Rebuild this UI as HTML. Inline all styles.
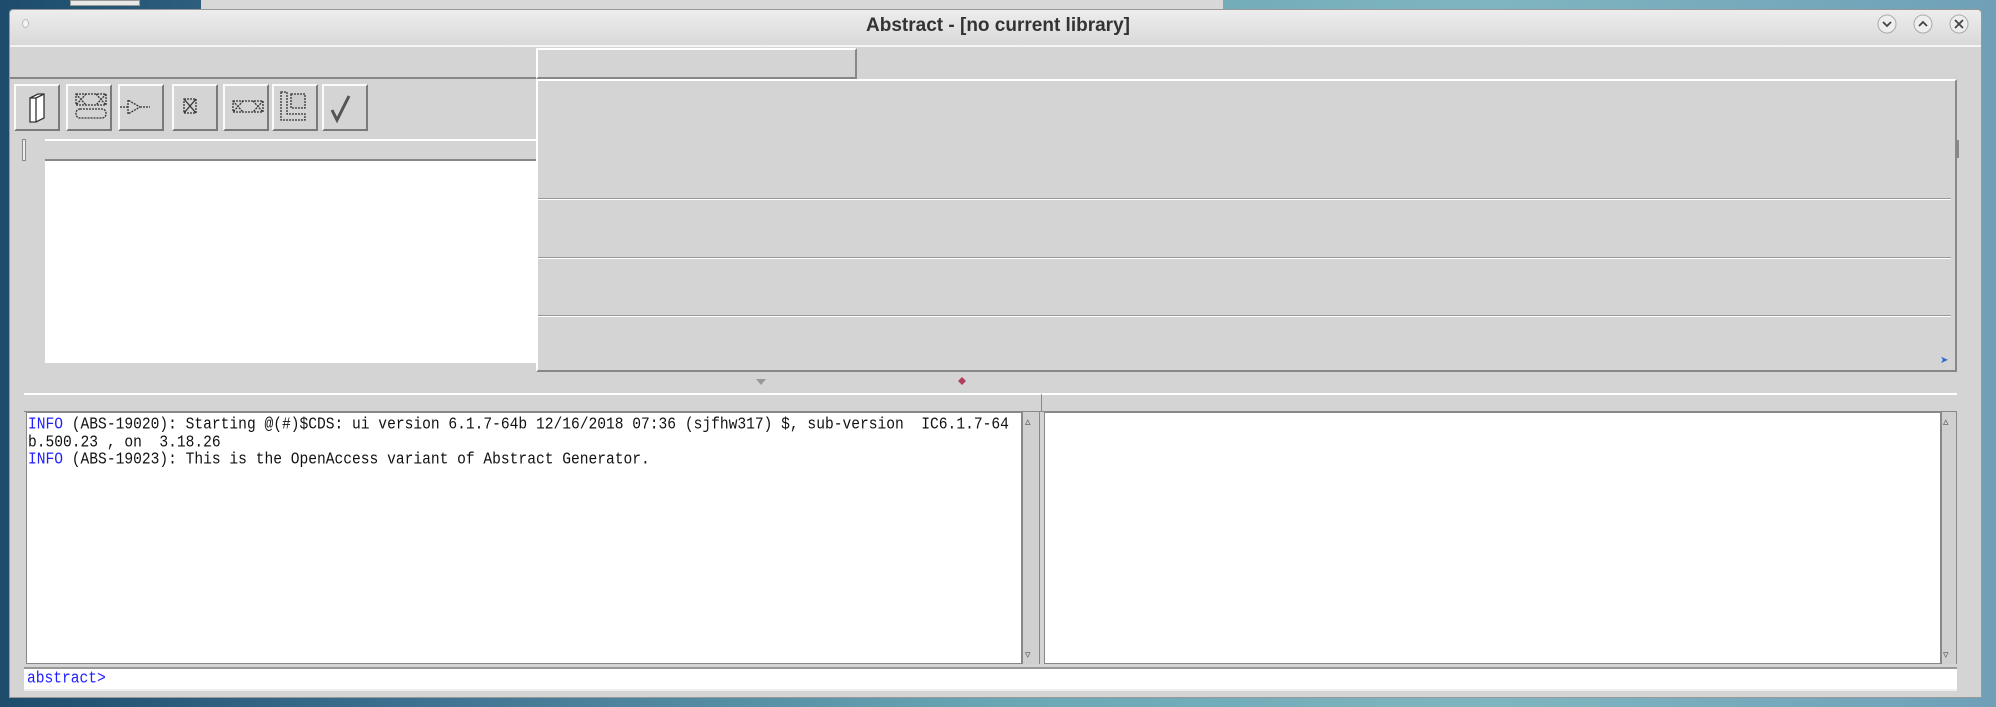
<!DOCTYPE html>
<html><head><meta charset="utf-8"><style>
*{margin:0;padding:0;box-sizing:border-box}
body{width:1996px;height:707px;overflow:hidden;position:relative;background:linear-gradient(90deg,#1d4c6c 0%,#3d7090 20%,#6aa6b4 50%,#7fb5c0 75%,#6fa0b8 100%);font-family:"Liberation Sans",sans-serif}
.a{position:absolute}
.mono{font-family:"Liberation Mono",monospace;font-size:14.6px;letter-spacing:0;line-height:15.5px;color:#111;white-space:pre;transform:scaleY(1.13);transform-origin:0 0}
.b{color:#2020ff}
.btn{position:absolute;top:84px;width:46px;height:47px;background:#d4d4d4;border:2px solid;border-color:#fafafa #7a7a7a #7a7a7a #fafafa}
.sb{position:absolute;background:#d0d0d0;border-left:1px solid #888;border-right:1px solid #888}
</style></head><body>
<div class="a" style="left:201px;top:0;width:1022px;height:9px;background:#d8d8d8"></div>
<div class="a" style="left:70px;top:0;width:70px;height:6px;background:#e8e8e8;border:1px solid #999"></div>
<div class="a" style="left:9px;top:9px;width:1973px;height:689px;background:#d4d4d4;border:1px solid #999;border-radius:4px 4px 0 0"></div>
<div class="a" style="left:10px;top:10px;width:1971px;height:37px;background:linear-gradient(#ededed,#d9d9d9);border-radius:4px 4px 0 0;border-bottom:2px solid #f4f4f4"></div>
<div class="a" style="left:22px;top:19px;width:7px;height:9px;border-radius:50%;background:#f4f4f4;border:1px solid #bbb"></div>
<div class="a" style="left:0;top:15px;width:1996px;text-align:center;font-weight:bold;font-size:19px;color:#333">Abstract - [no current library]</div>
<svg class="a" style="left:1872px;top:13px" width="100" height="22">
<g fill="#eee" stroke="#aaa"><circle cx="15" cy="11" r="9"/><circle cx="51" cy="11" r="9"/><circle cx="87" cy="11" r="9"/></g>
<g fill="none" stroke="#444" stroke-width="1.8"><path d="M11 9l4 4 4-4"/><path d="M47 13l4-4 4 4"/><path d="M83 7l8 8M91 7l-8 8"/></g></svg>
<div class="a" style="left:10px;top:48px;width:526px;height:31px;border-bottom:2px solid #888"></div>
<div class="a" style="left:536px;top:48px;width:321px;height:31px;border:2px solid;border-color:#fff #888 #888 #fff"></div>
<div class="btn" style="left:14px"></div><div class="btn" style="left:66px"></div><div class="btn" style="left:118px"></div><div class="btn" style="left:172px"></div><div class="btn" style="left:223px"></div><div class="btn" style="left:272px"></div><div class="btn" style="left:322px"></div>
<svg class="a" style="left:14px;top:84px" width="360" height="47" fill="none" stroke="#333" stroke-width="1.3">
<path d="M16 14l8-4h6v24l-8 4h-6z M16 14h6v24 M22 14l8-4" fill="#fff"/>
<g stroke-dasharray="2 1"><rect x="62" y="10" width="30" height="11"/><path d="M62 10l10 11M72 10l-10 11M82 10l10 11M92 10l-10 11"/><rect x="62" y="25" width="30" height="9" rx="4"/></g>
<g stroke-dasharray="2 1"><path d="M114 16v14l12-7z M106 23h8 M126 23h10"/></g>
<rect x="170" y="15" width="12" height="14" stroke-dasharray="2 1"/><path d="M170 15l12 14M182 15l-12 14"/>
<g stroke-dasharray="2 1"><rect x="219" y="17" width="30" height="11"/><path d="M219 17l10 11M229 17l-10 11M239 17l10 11M249 17l-10 11"/></g>
<g stroke-dasharray="2 1"><path d="M267 8v28h24v-6h-18v-22z"/><rect x="277" y="10" width="14" height="14" fill="#ccc"/></g>
<path d="M318 26l5 10 12-24" stroke="#555" stroke-width="3"/>
</svg>
<div class="a" style="left:22px;top:139px;width:4px;height:22px;border:1px solid #888;background:#eee"></div>
<div class="a" style="left:45px;top:139px;width:491px;height:22px;border-top:2px solid #fff;border-bottom:2px solid #888"></div>
<div class="a" style="left:45px;top:161px;width:491px;height:202px;background:#fff"></div>
<div class="a" style="left:536px;top:79px;width:1421px;height:293px;border:2px solid;border-color:#fff #888 #888 #fff;background:#d4d4d4"></div>
<div class="a" style="left:538px;top:198px;width:1413px;height:2px;border-top:1px solid #999;border-bottom:1px solid #fff"></div>
<div class="a" style="left:538px;top:257px;width:1413px;height:2px;border-top:1px solid #999;border-bottom:1px solid #fff"></div>
<div class="a" style="left:538px;top:315px;width:1413px;height:2px;border-top:1px solid #999;border-bottom:1px solid #fff"></div>
<div class="a" style="left:1957px;top:140px;width:2px;height:18px;background:#888"></div>
<div class="a" style="left:1940px;top:355px;color:#2a6ad0;font-size:10px">➤</div>
<svg class="a" style="left:754px;top:376px" width="220" height="12"><path d="M2 3l5 6 5-6z" fill="#999"/><path d="M208 1l4 4-4 4-4-4z" fill="#b0405a"/></svg>
<div class="a" style="left:24px;top:393px;width:1017px;height:19px;border-top:2px solid #fff;border-bottom:1px solid #888"></div>
<div class="a" style="left:1041px;top:393px;width:916px;height:19px;border-top:2px solid #fff;border-left:1px solid #888;border-bottom:1px solid #888"></div>
<div class="a" style="left:26px;top:412px;width:996px;height:252px;background:#fff;border:1px solid #888"></div>
<div class="sb" style="left:1022px;top:412px;width:18px;height:252px"></div>
<div class="a" style="left:1025px;top:415px;font-size:11px;color:#555">▵</div><div class="a" style="left:1025px;top:648px;font-size:11px;color:#555">▿</div>
<div class="a" style="left:1044px;top:412px;width:897px;height:252px;background:#fff;border:1px solid #888"></div>
<div class="sb" style="left:1941px;top:412px;width:16px;height:252px"></div>
<div class="a" style="left:1943px;top:415px;font-size:11px;color:#555">▵</div><div class="a" style="left:1943px;top:648px;font-size:11px;color:#555">▿</div>
<div class="a mono" style="left:28px;top:417px"><span class="b">INFO</span> (ABS-19020): Starting @(#)$CDS: ui version 6.1.7-64b 12/16/2018 07:36 (sjfhw317) $, sub-version  IC6.1.7-64
b.500.23 , on  3.18.26
<span class="b">INFO</span> (ABS-19023): This is the OpenAccess variant of Abstract Generator.</div>
<div class="a" style="left:24px;top:667px;width:1933px;height:24px;background:#fff;border-top:2px solid #999;border-bottom:2px solid #eee"></div>
<div class="a mono b" style="left:27px;top:671px">abstract&gt;</div>
</body></html>
